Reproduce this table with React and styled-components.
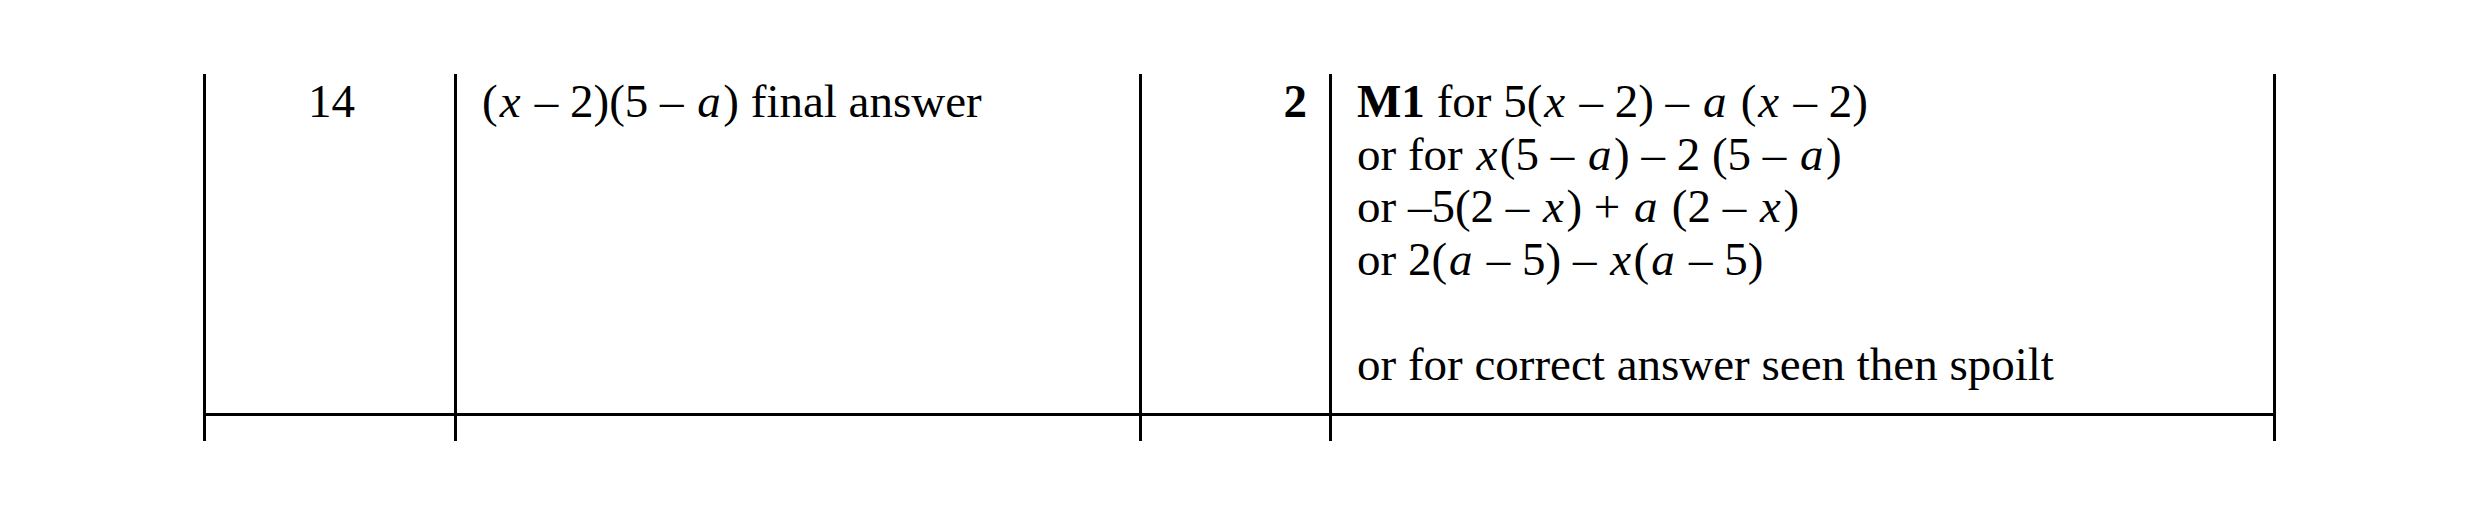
import React from "react";
import styled, { createGlobalStyle } from "styled-components";

const GlobalStyle = createGlobalStyle`
  html, body {
    margin: 0;
    padding: 0;
    background: #ffffff;
  }
`;

const Page = styled.div`
  padding: 74px 0 0 203px;
  font-family: "Liberation Serif", "Times New Roman", serif;
  font-size: 47px;
  line-height: 52.6px;
  color: #000;
`;

const Row = styled.div`
  display: grid;
  width: max-content;
  grid-template-columns: 251px 685px 190px 947px;
  height: ${(props) => props.$height}px;
  border-bottom: ${(props) => (props.$ruled ? "3px solid #000" : "none")};
`;

const Cell = styled.div`
  box-sizing: border-box;
  border-left: 3px solid #000;
  border-right: ${(props) => (props.$last ? "3px solid #000" : "none")};
  padding: 1px 22px 0 25px;
  text-align: ${(props) => props.$align || "left"};
  font-weight: ${(props) => (props.$bold ? 700 : 400)};
  white-space: nowrap;
`;

const Line = styled.div`
  min-height: 52.6px;
`;

// italic variables sit a touch looser than the roman text around them
const V = styled.i`
  font-style: italic;
  margin: 0 2.5px 0 2px;
`;

const Mark = styled.b`
  font-weight: 700;
`;

const App = () => (
  <>
    <GlobalStyle />
    <Page>
      <Row $height={339} $ruled>
        <Cell $align="center">14</Cell>
        <Cell>
          (<V>x</V> – 2)(5 – <V>a</V>) final answer
        </Cell>
        <Cell $align="right" $bold>
          2
        </Cell>
        <Cell $last>
          <Line>
            <Mark>M1</Mark> for 5(<V>x</V> – 2) – <V>a</V> (<V>x</V> – 2)
          </Line>
          <Line>
            or for <V>x</V>(5 – <V>a</V>) – 2 (5 – <V>a</V>)
          </Line>
          <Line>
            or –5(2 – <V>x</V>) + <V>a</V> (2 – <V>x</V>)
          </Line>
          <Line>
            or 2(<V>a</V> – 5) – <V>x</V>(<V>a</V> – 5)
          </Line>
          <Line />
          <Line>or for correct answer seen then spoilt</Line>
        </Cell>
      </Row>
      <Row $height={25}>
        <Cell />
        <Cell />
        <Cell />
        <Cell $last />
      </Row>
    </Page>
  </>
);

export default App;
